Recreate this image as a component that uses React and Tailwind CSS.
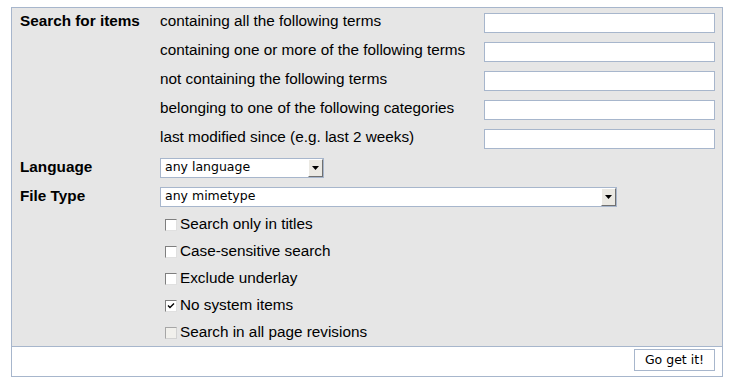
import React from "react";

const B = "border-[#a7b6cc]";

function TextInput() {
  return <div className={`w-[231px] h-[20px] bg-white border ${B}`} />;
}

function Select({ label, width }) {
  return (
    <div className={`relative h-[20px] bg-white border ${B} flex items-center`} style={{ width }}>
      <span className="pl-[4px] text-[12.5px] text-black" style={{ fontFamily: '"DejaVu Sans", sans-serif' }}>{label}</span>
      <div className="absolute right-0 top-0 w-[15px] h-[18px] bg-[#ebe9e3] border-t border-l border-t-white border-l-white border-r border-b border-r-[#707070] border-b-[#707070] flex items-center justify-center">
        <svg width="7" height="4" viewBox="0 0 7 4"><path d="M0 0H7L3.5 4Z" fill="#000" /></svg>
      </div>
    </div>
  );
}

function Check({ label, checked, disabled }) {
  return (
    <div className="h-[27px] flex items-center">
      <span
        className={`ml-[5px] w-[12px] h-[12px] border-t border-l border-b border-r flex items-center justify-center ${
          disabled
            ? "bg-[#f1f0ec] border-t-[#a6a6a6] border-l-[#a6a6a6] border-b-[#d2d2d2] border-r-[#d2d2d2]"
            : "bg-white border-t-[#7f7f7f] border-l-[#7f7f7f] border-b-[#e0e0e0] border-r-[#e0e0e0]"
        }`}
      >
        {checked && (
          <svg width="8" height="7" viewBox="0 0 8 7">
            <path d="M1 3.5L3 5.5L7 1.5" stroke="#000" strokeWidth="1.4" fill="none" />
          </svg>
        )}
      </span>
      <span className="ml-[3px] pb-[1px]">{label}</span>
    </div>
  );
}

const terms = [
  "containing all the following terms",
  "containing one or more of the following terms",
  "not containing the following terms",
  "belonging to one of the following categories",
  "last modified since (e.g. last 2 weeks)",
];

export default function App() {
  return (
    <div className="w-[731px] h-[383px] bg-white pt-[7px] pl-[11px]" style={{ fontFamily: '"Liberation Sans", Arial, sans-serif' }}>
      <div className={`w-[712px] border ${B} text-[15.3px] text-black`}>
        <div className="bg-[#e6e6e6] pl-[8px] pr-[7px]">
          {terms.map((t, i) => (
            <div key={t} className="h-[29px] flex items-center">
              <div className="w-[140px] font-bold pb-[2px]">{i === 0 ? "Search for items" : ""}</div>
              <div className="w-[324px] pb-[2px]">{t}</div>
              <TextInput />
            </div>
          ))}
          <div className="h-[29px] flex items-center">
            <div className="w-[140px] font-bold pb-[1px]">Language</div>
            <Select label="any language" width={164} />
          </div>
          <div className="h-[29px] flex items-center">
            <div className="w-[140px] font-bold pb-[1px]">File Type</div>
            <Select label="any mimetype" width={457} />
          </div>
          <div className="pl-[140px]">
            <Check label="Search only in titles" />
            <Check label="Case-sensitive search" />
            <Check label="Exclude underlay" />
            <Check label="No system items" checked />
            <Check label="Search in all page revisions" disabled />
          </div>
        </div>
        <div className={`border-t ${B} h-[30px] flex justify-end pr-[7px] pt-[2px]`}>
          <div className={`w-[81px] h-[22px] border ${B} bg-white flex items-center justify-center text-[12.5px]`} style={{ fontFamily: '"DejaVu Sans", sans-serif' }}>
            Go get it!
          </div>
        </div>
      </div>
    </div>
  );
}
